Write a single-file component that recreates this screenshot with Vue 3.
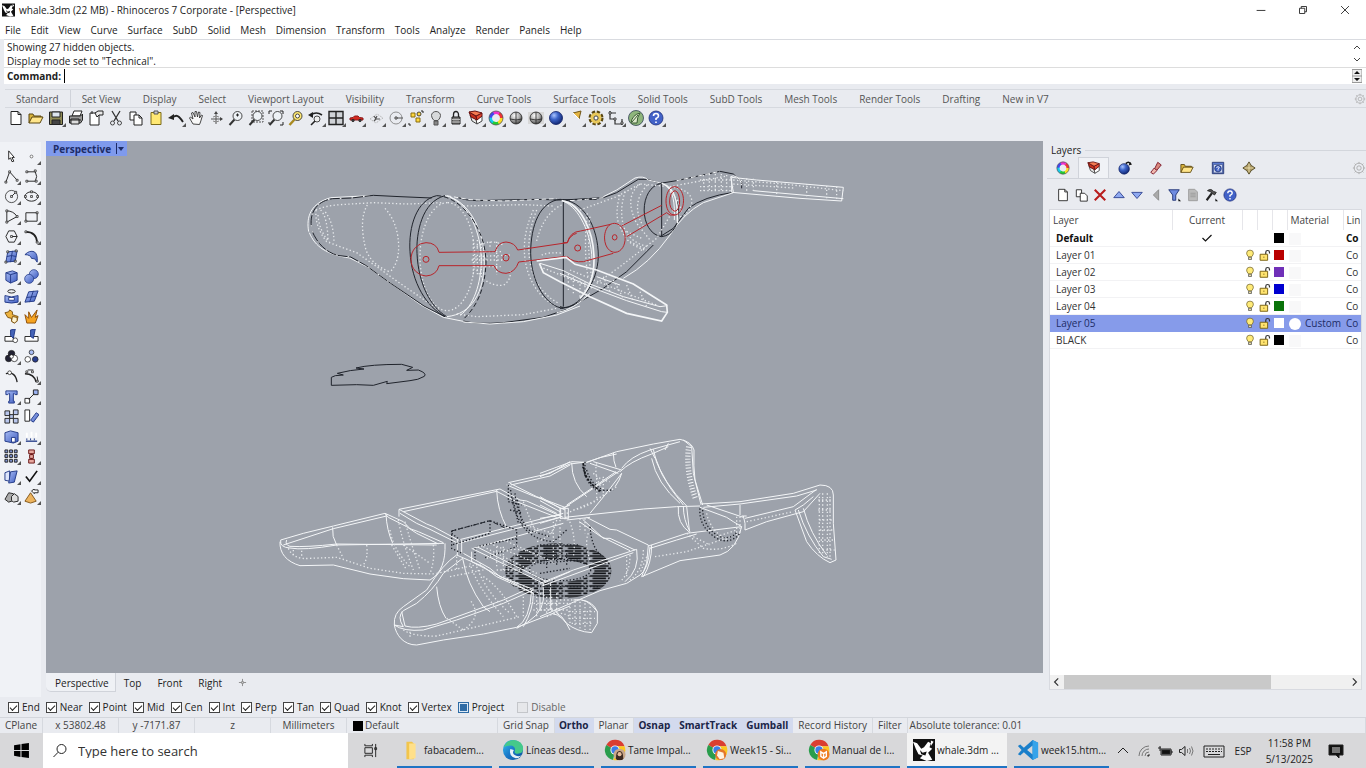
<template>
    <div class="app">
        <svg class="defs" aria-hidden="true">
            <defs>
                <radialGradient id="gBlue" cx=".35" cy=".3" r=".8">
                    <stop offset="0" stop-color="#a9c4ff" />
                    <stop offset=".4" stop-color="#3b63c8" />
                    <stop offset="1" stop-color="#0c1d63" />
                </radialGradient>
                <radialGradient id="gGrey" cx=".4" cy=".3" r=".8">
                    <stop offset="0" stop-color="#fff" />
                    <stop offset=".5" stop-color="#aaa" />
                    <stop offset="1" stop-color="#222" />
                </radialGradient>
                <linearGradient id="gBox" x2="1" y2="1">
                    <stop offset="0" stop-color="#a9bdf5" />
                    <stop offset="1" stop-color="#3e5cc0" />
                </linearGradient>
                <linearGradient id="gEdge" x2="1" y2="1">
                    <stop offset="0" stop-color="#35c1f1" />
                    <stop offset=".5" stop-color="#1a78c8" />
                    <stop offset="1" stop-color="#0c4f96" />
                </linearGradient>
            </defs>
        </svg>

        <!-- TITLE BAR -->
        <header class="titlebar">
            <svg class="logo" viewBox="0 0 16 16" v-html="art.rhino"></svg>
            <h1>whale.3dm (22 MB) - Rhinoceros 7 Corporate - [Perspective]</h1>
            <div class="windowButtons">
                <button aria-label="Minimize"><svg viewBox="0 0 16 16"><path d="M3 8.5h10" /></svg></button>
                <button aria-label="Restore"><svg viewBox="0 0 16 16"><path d="M4 6h6v6H4zM6 6V4h6v6h-2" /></svg></button>
                <button aria-label="Close"><svg viewBox="0 0 16 16"><path d="M3.500 3.500l9 9M12.500 3.500l-9 9" /></svg></button>
            </div>
        </header>

        <nav class="menu">
            <a v-for="m in menus" :key="m" href="#">{{ m }}</a>
        </nav>

        <!-- COMMAND AREA -->
        <section class="command">
            <div class="history">
                <div>
                    <p>Showing 27 hidden objects.</p>
                    <p>Display mode set to "Technical".</p>
                </div>
                <div class="arrows">
                    <svg viewBox="0 0 10 8"><path d="M2 6l3-3 3 3" /></svg>
                    <svg viewBox="0 0 10 8"><path d="M2 2l3 3 3-3" /></svg>
                </div>
            </div>
            <div class="prompt">
                <label for="cmd">Command:</label>
                <span class="caret"></span>
                <input id="cmd" v-model="command" type="text" />
                <svg class="spin" viewBox="0 0 10 14">
                    <path d="M0 .5h10v13H0zM0 7h10" fill="#eee" stroke="#999" />
                    <path d="M2 5l3-3 3 3zM2 9l3 3 3-3z" fill="#111" />
                </svg>
            </div>
        </section>

        <!-- TOOLBARS -->
        <nav class="tabs">
            <button v-for="(t, i) in toolTabs" :key="t" :class="{ active: i === 0 }">{{ t }}</button>
            <svg class="gear" viewBox="0 0 16 16" v-html="art.cog"></svg>
        </nav>
        <div class="toolbar">
            <button
                v-for="t in toolbar"
                :key="t"
                class="tool"
                :class="{ more: withMenu.includes(t) }"
                :aria-label="t"
            >
                <svg viewBox="0 0 16 16" v-html="art[t]"></svg>
            </button>
        </div>

        <main class="work">
            <aside class="sidebar">
                <button
                    v-for="(t, i) in sideTools"
                    :key="i"
                    class="tool"
                    :class="{ more: t.more }"
                    :aria-label="t.name"
                >
                    <svg viewBox="0 0 16 16" v-html="t.art"></svg>
                </button>
            </aside>

            <!-- VIEWPORT -->
            <section class="center">
                <div class="viewport">
                    <svg class="scene" viewBox="0 0 2991 1596" preserveAspectRatio="xMidYMid meet">
                        <defs>
                            <pattern id="hatch" width="74" height="15" patternUnits="userSpaceOnUse">
                                <path class="ink" d="M0 3h58M64 3h6M10 10h40M56 10h12" />
                            </pattern>
                        </defs>
                        <g transform="translate(1482 867)">
                            <ellipse class="hatched" cx="55" cy="423" rx="134" ry="58" />
                            <ellipse class="kd" cx="60" cy="420" rx="92" ry="32" />
                        </g>
                        <g v-for="(g, i) in scene" :key="i" :transform="g.at">
                            <path v-for="(p, j) in g.paths" :key="j" :class="p[0]" :d="p[1]" />
                        </g>
                    </svg>
                    <button class="viewTitle">Perspective<i></i></button>
                </div>
                <nav class="viewTabs">
                    <button class="active">Perspective</button>
                    <button>Top</button>
                    <button>Front</button>
                    <button>Right</button>
                    <button class="add" aria-label="New viewport">
                        <svg viewBox="0 0 10 10"><path d="M5 1v3M5 6v3M1 5h3M6 5h3M4 4h2v2H4z" /></svg>
                    </button>
                </nav>
            </section>

            <!-- LAYERS PANEL -->
            <aside class="panel">
                <h2>Layers</h2>
                <nav class="panelTabs">
                    <button v-for="t in panelTabs" :key="t" :class="{ active: t === 'layers' }" :aria-label="t">
                        <svg viewBox="0 0 16 16" v-html="art[t]"></svg>
                    </button>
                    <svg class="gear" viewBox="0 0 16 16" v-html="art.cog"></svg>
                </nav>
                <div class="panelTools">
                    <button v-for="t in panelTools" :key="t" :aria-label="t">
                        <svg viewBox="0 0 16 16" v-html="art[t]"></svg>
                    </button>
                </div>
                <div class="list">
                    <table>
                        <colgroup>
                            <col />
                            <col class="cCurrent" />
                            <col class="cIcon" />
                            <col class="cIcon" />
                            <col class="cIcon" />
                            <col class="cMaterial" />
                            <col class="cLine" />
                        </colgroup>
                        <thead>
                            <tr>
                                <th>Layer</th>
                                <th class="mid">Current</th>
                                <th></th>
                                <th></th>
                                <th></th>
                                <th>Material</th>
                                <th>Lin</th>
                            </tr>
                        </thead>
                        <tbody>
                            <tr
                                v-for="l in layers"
                                :key="l.name"
                                :class="{ current: l.current, selected: l.name === selected }"
                                @click="selected = l.name"
                            >
                                <td>{{ l.name }}</td>
                                <td class="mid">
                                    <svg v-if="l.current" viewBox="0 0 16 16" v-html="art.tick"></svg>
                                </td>
                                <td><svg v-if="!l.current" viewBox="0 0 16 16" v-html="art.on"></svg></td>
                                <td><svg v-if="!l.current" viewBox="0 0 16 16" v-html="art.unlocked"></svg></td>
                                <td><span class="swatch" :style="{ background: l.color }"></span></td>
                                <td class="material"><span class="ball"></span>{{ l.material }}</td>
                                <td>Co</td>
                            </tr>
                        </tbody>
                    </table>
                    <div class="hscroll">
                        <svg viewBox="0 0 10 10"><path d="M6 2L3 5l3 3" /></svg>
                        <div class="track"><div class="thumb"></div></div>
                        <svg viewBox="0 0 10 10"><path d="M4 2l3 3-3 3" /></svg>
                    </div>
                </div>
            </aside>
        </main>

        <!-- OSNAP -->
        <div class="osnap">
            <label v-for="s in snaps" :key="s.name" :class="s.kind">
                <input v-model="s.on" type="checkbox" />{{ s.name }}
            </label>
        </div>

        <div class="status">
            <button class="cplane">CPlane</button>
            <span class="coord">x 53802.48</span>
            <span class="coord">y -7171.87</span>
            <span class="coord">z</span>
            <span class="coord">Millimeters</span>
            <button class="layer"><i></i>Default</button>
            <button v-for="m in modes" :key="m.name" :class="{ on: m.on }" @click="m.on = !m.on">{{ m.name }}</button>
            <span class="tolerance">Absolute tolerance: 0.01</span>
        </div>

        <!-- TASKBAR -->
        <footer class="taskbar">
            <button class="start" aria-label="Start">
                <svg viewBox="0 0 16 16"><path d="M1 3l6-1v5.500H1zM8 1.900L15 1v6.500H8zM1 8.500h6V14l-6-1zM8 8.500h7V15l-7-.900z" /></svg>
            </button>
            <div class="search">
                <svg viewBox="0 0 16 16"><circle cx="9.500" cy="6" r="4.500" /><path d="M6.200 9.200L1.500 14" /></svg>
                <input v-model="search" type="text" placeholder="Type here to search" aria-label="Search" />
            </div>
            <button class="taskView" aria-label="Task view">
                <svg viewBox="0 0 16 16"><path d="M2 1v2h8V1M2 15v-2h8v2M2 5h8v6H2zM13.500 1v14M12.500 5h2v2h-2z" /></svg>
            </button>
            <div class="tasks">
                <button v-for="t in tasks" :key="t.title" :class="{ active: t.active }">
                    <svg viewBox="0 0 24 24" v-html="t.art"></svg>
                    <span>{{ t.title }}</span>
                </button>
            </div>
            <div class="tray">
                <svg viewBox="0 0 16 16"><path d="M3 10l5-5 5 5" /></svg>
                <svg viewBox="0 0 16 16"><path d="M3 13a10 10 0 0 1 10-10M6 13a7 7 0 0 1 7-7M9 13a4 4 0 0 1 4-4" stroke="#777" /><path d="M11.500 13l1.500-1.500V13z" /></svg>
                <svg viewBox="0 0 16 16"><path d="M4 6h10v6H4zM14 8h1v2h-1M1 5h3M3 3v5" /><path d="M5 7h8v4H5z" fill="#111" /></svg>
                <svg viewBox="0 0 16 16"><path d="M1.500 6.500h2L7 3.500v9l-3.500-3h-2z" /><path d="M9.500 6v4M11.500 5q2 3 0 6M13.500 3.500q3 4.500 0 9" stroke="#777" /></svg>
                <svg class="keys" viewBox="0 0 22 16"><path d="M1 3h20v11H1z" /><path d="M3 6h16M3 8.500h16" stroke-dasharray="2 1" /><path d="M5 11.500h12" /></svg>
                <span class="lang">ESP</span>
                <time>11:58 PM<br />5/13/2025</time>
                <svg class="note" viewBox="0 0 16 16"><path d="M1 2h14v10h-4v3l-3-3H1z" fill="#111" /><path d="M4 5h8M4 7h8M4 9h8" stroke="#ddd" /></svg>
            </div>
        </footer>
    </div>
</template>

<script setup>
import { ref, reactive } from "vue";

const command = ref("");
const search = ref("");
const selected = ref("Layer 05");

const menus = [
    "File", "Edit", "View", "Curve", "Surface", "SubD", "Solid", "Mesh", "Dimension",
    "Transform", "Tools", "Analyze", "Render", "Panels", "Help",
];
const toolTabs = [
    "Standard", "Set View", "Display", "Select", "Viewport Layout", "Visibility", "Transform",
    "Curve Tools", "Surface Tools", "Solid Tools", "SubD Tools", "Mesh Tools", "Render Tools",
    "Drafting", "New in V7",
];

// small helpers for the icon drawings
const line = (d, c = "#222", w = 1) => `<path d="${d}" fill="none" stroke="${c}" stroke-width="${w}"/>`;
const fill = (d, f, c = "#222", w = 1) => `<path d="${d}" fill="${f}" stroke="${c}" stroke-width="${w}"/>`;
const ball = (x, y, r, f, c = "#222") => `<circle cx="${x}" cy="${y}" r="${r}" fill="${f}" stroke="${c}" stroke-width=".8"/>`;
const dots = (...pts) => pts.map(([x, y]) => `<path d="M${x - 1} ${y - 1}h2v2h-2z" fill="#fff" stroke="#222" stroke-width=".8"/>`).join("");

const wheel = ["#e33", "#e3c", "#44e", "#1ce", "#2c3", "#fd2"]
    .map((c, i) => `<circle cx="8" cy="8" r="5.500" fill="none" stroke="${c}" stroke-width="3" stroke-dasharray="6 28.600" transform="rotate(${-60 - i * 60} 8 8)"/>`)
    .join("") + ball(8, 8, 7, "none", "#555");
const lens = line("M6.500 9.500L1.500 15", "#333", 2) + ball(9.500, 6, 4.500, "#eef2f6");
const question = '<path d="M5.500 6q0-2.500 2.500-2.500T10.500 6Q10.500 7.500 8 8.500V10M8 11.500v1.500" fill="none" stroke="#fff" stroke-width="1.600"/>';
const folder = fill("M1 13V4h4l1 2h7v2", "#d8b33c", "#5b4710") + fill("M1 13l3-6h11l-3 6z", "#ffe58a", "#5b4710");
const stack = fill("M2 5l6 4 1 5-5-3z", "#e9e9e9", "#444") + fill("M8 9l6-3v5l-5 3z", "#fff", "#444") + fill("M1 2l7 4 1 4-6-3z", "#c72f1b", "#611") + fill("M8 6l6-3v3l-5 4z", "#e5482f", "#611") + fill("M1 2l6-1 7 2-6 3z", "#f47a50", "#611");
const page = fill("M3 1.500h7l3 3v10H3z", "#fff") + line("M10 1.500v3h3");
const printer = fill("M4 6l2-5h8l-2 5z", "#fff") + fill("M1.500 6h11l2-2v6l-2 3h-11z", "#999") + fill("M3 9h8v5H3z", "#ddd") + line("M1 10h12");

const art = {
    rhino: '<path d="M0 0h16v16H0z" fill="#111"/><path d="M0 2l3 1 3 4 2-1 3-4 2 1-1 3 2 1-3 3 3 5-4 1-5-2 2-2-3-1-2-4z" fill="#fff"/><path d="M5 8l2 2 3-1-1 3-3-1z" fill="#111"/><path d="M13 1l2 1-2 3z" fill="#fff"/>',
    cog: ball(8, 8, 5.5, "none", "#999") + ball(8, 8, 2.5, "none", "#999") + line("M8 1v2M8 13v2M1 8h2M13 8h2M3 3l1.500 1.500M11.500 11.500L13 13M13 3l-1.500 1.500M4.500 11.500L3 13", "#aaa"),
    tick: line("M2 8l4 4 8-8", "#111", 1.6),
    on: fill("M6 10.500Q3.500 8 3.500 5.500a4.500 4 0 0 1 9 0Q12.500 8 10 10.500z", "#ffeb78", "#76662a") + fill("M6 11h4v3H6z", "#e8dca0", "#555"),
    unlocked: line("M9 7V4.500Q9 2 11.500 2T14 4.500V6", "#333", 1.6) + fill("M1.500 7h10v8h-10z", "#ffe36e", "#7a6315", 1.3) + line("M6.500 10v2", "#7a6315"),
    new: page,
    open: folder,
    save: fill("M1.500 2h13v12.500h-13z", "#8f8a55") + fill("M4 2h8v5H4z", "#dde5ee") + fill("M4 10h8v4.500H4z", "#444"),
    print: printer,
    properties: fill("M2 3h9v12H2z", "#fff") + fill("M7 3l3-2h5v4h-4l-2 2z", "#e8e8e8") + line("M4 1v3"),
    cut: line("M4 1l6 10M12 1L6 11", "#333", 1.3) + ball(4.5, 13, 2, "none") + ball(11.5, 13, 2, "none"),
    copy: fill("M2 2h6v8H2z", "#fff") + fill("M6 5h5l3 3v7H6z", "#fff") + line("M11 5v3h3"),
    paste: fill("M3 2.500h10v12H3z", "#ffe873", "#7a6a18") + fill("M6 1h4v3H6z", "#ccc", "#555"),
    undo: line("M4 8q4-4 7-1t4 5", "#222", 1.8) + '<path d="M0 8l6-4v6z" fill="#222"/>',
    pan: fill("M5 14L1.500 8l1-1L5 9 3.500 3l1.500-.5L7 7V1.500h1.500L9.500 7l1-5 1.500.5L11.500 8l2-3 1 .5L12.500 12l-1 2.500z", "#f8f8f8", "#333", 0.9),
    rotate: line("M8 3v11M3 9h11", "#555") + line("M5 7q3-2 6 0M5 11q3 2 6 0", "#888") + '<path d="M6 4l2-3 2 3zM12 7l3 2-3 2z" fill="#444"/>',
    zoom: lens + line("M8 5h3M9.500 3.500v3"),
    zoomWindow: '<path d="M4 1h11v11H4z" fill="none" stroke="#555" stroke-dasharray="2 1"/>' + lens,
    zoomExtents: lens + line("M1 4V1h3M12 1h3v3M15 12v3h-3M1 12v2"),
    zoomSelected: line("M6.500 9.500L1.500 15", "#a98a20", 2.4) + ball(9.5, 6, 4.5, "#ffe873") + ball(9.5, 6, 2, "#fff"),
    undoView: line("M3 5q5-4 11 0", "#222", 1.6) + '<path d="M0 5l5-3v6z" fill="#222"/>' + ball(9, 9, 3, "#eee") + line("M7 11l-4 4", "#222", 1.6),
    fourView: fill("M1 1.500h14v13H1z", "#cfd2d6", "#222", 1.4) + line("M8 2v12M1 8h14", "#222", 1.4),
    car: fill("M2 10V8l3-.5L6.500 6H10l1.500 1.500L15 8v2z", "#d32a20", "#8a1a1a") + ball(5, 10.5, 1.2, "#444") + ball(12, 10.5, 1.2, "#444"),
    cplane: '<path d="M2 9l7-5 6 4-7 5z" fill="none" stroke="#aaa" stroke-dasharray="1 1"/>' + line("M6 6l2 3h4M8 9l-2 2M9 6l-2 4", "#555", 1.2),
    circle: ball(8, 8, 6, "none", "#777") + line("M8 8h7", "#555") + dots([8, 8]),
    points: fill("M3 3h4v4H3z", "#ffd83e", "#886c10") + fill("M8 8h4v4H8z", "#ffd83e", "#886c10") + ball(11, 4, 2, "#ffd83e") + line("M13 1h2v2M1 13v2h2"),
    bulb: fill("M6 10.500Q3.500 8 3.500 5.500a4.500 4 0 0 1 9 0Q12.500 8 10 10.500z", "#d7d9db", "#555") + fill("M6 11h4v4H6z", "#888", "#555"),
    lock: line("M5.500 7V4.500a2.500 3 0 0 1 5 0V7", "#222", 1.3) + fill("M4 7h8v7H4z", "#777") + line("M4 9.500h8M4 12h8", "#bbb"),
    layers: stack,
    color: wheel,
    shade: ball(8, 8, 6, "url(#gGrey)") + line("M8 2v12M2 9q6 2 12 0", "#333", 0.9),
    render: '<path d="M0 2h16v12H0z" fill="#d8d8d8"/>' + ball(8, 8, 6, "url(#gGrey)") + line("M8 2v12M2 9q6 2 12 0", "#333", 0.9),
    sphere: ball(8, 8, 6.5, "url(#gBlue)", "#0c1d63"),
    light: fill("M5 3l8-2-2 8z", "#e4b545", "#6f5518") + line("M5 3l6 6", "#fff"),
    options: '<circle cx="8" cy="8" r="5" fill="none" stroke="#584510" stroke-width="5" stroke-dasharray="2.600 1.330"/><circle cx="8" cy="8" r="4" fill="none" stroke="#e9c85a" stroke-width="3"/>' + ball(8, 8, 2, "#fff"),
    dimension: line("M2 1v8h5M7 9v5h7M2 3h6M14 9v6", "#333", 1.2) + dots([2, 3], [7, 9], [14, 13]),
    grasshopper: ball(8, 8, 7.5, "#8eb57c", "#345") + fill("M3 13q1-8 9-10-3 4-3 10z", "#dde9cc", "#385a32") + line("M4 12L10 5", "#385a32"),
    help: ball(8, 8, 7, "#4262c8", "#1c2d78") + question,
    globe: ball(7, 9, 6, "url(#gBlue)", "#0c1d63") + line("M9 3q3-3 5 0", "#111", 1.8) + '<path d="M12 5l4-1-2-3z" fill="#111"/>',
    link: fill("M10 1.500l4 3-5 6-3-1z", "#d9887d", "#712") + fill("M6 8l3 3-4 4-3-2z", "#f0b8ae", "#712"),
    folder,
    helpBox: fill("M1.500 1.500h13v13h-13z", "#5b7ad0", "#24356f") + fill("M3 4h10v9.500H3z", "#dfe7fa", "#24356f", 0.6) + ball(8, 8.7, 3.8, "#3f60c4", "#24356f") + line("M6.500 8q0-1.500 1.500-1.500T9.500 8L8 9v2", "#fff", 0.9),
    move: fill("M8 1l2.500 4L15 8l-4.500 3L8 15l-2.500-4L1 8l4.500-3z", "#a89560", "#4d431f") + line("M8 3v10M3 8h10", "#efe3b0"),
    newLayer: page,
    newSublayer: fill("M1.500 2h6v8h-6z", "#fff") + fill("M6 6h5l3 3v6H6z", "#fff"),
    remove: line("M2 2l12 12M14 2L2 14", "#b81c1c", 2.4),
    up: fill("M8 4l6 7H2z", "#8fa9f0", "#2b3f8f"),
    down: fill("M8 12l6-7H2z", "#8fa9f0", "#2b3f8f"),
    back: fill("M11 2v12L5 8z", "#aaa", "#888"),
    filter: fill("M2 2h12L10 8v6H6.500V8z", "#6f8be0", "#1c2f70") + '<path d="M13 15v-3l3 3z" fill="#111"/>',
    sheet: fill("M3 1.500h7l3 3v10H3z", "#bbb", "#999") + line("M5 6h6M5 8h6M5 10h6", "#999"),
    hammer: line("M9 6l-6 8", "#222", 2.4) + fill("M4 3q4-3 7 1l3 1-2 3-5-4z", "#555") + '<path d="M13 15v-3l3 3z" fill="#111"/>',
};

const toolbar = [
    "new", "open", "save", "print", "properties", "cut", "copy", "paste", "undo", "pan", "rotate",
    "zoom", "zoomWindow", "zoomExtents", "zoomSelected", "undoView", "fourView", "car", "cplane",
    "circle", "points", "bulb", "lock", "layers", "color", "shade", "render", "sphere", "light",
    "options", "dimension", "grasshopper", "help",
];
const withMenu = [
    "save", "undo", "undoView", "fourView", "car", "cplane", "circle", "points", "bulb", "lock",
    "layers", "color", "render", "sphere", "light", "options", "dimension", "grasshopper", "help",
];
const panelTabs = ["color", "layers", "globe", "link", "folder", "helpBox", "move"];
const panelTools = ["newLayer", "newSublayer", "remove", "up", "down", "back", "filter", "sheet", "hammer", "help"];

const blue = "url(#gBox)";
const navy = "#223a86";
// two columns, read row by row
const sideTools = [
    { name: "Select", art: fill("M5 2l6 7H8.500l2 4-2 .5-1.500-4L5 11z", "#fff") },
    { name: "Point", more: true, art: ball(8, 8, 1.5, "#fff", "#555") },
    { name: "Polyline", more: true, art: line("M2 14L6 3l8 9") + dots([2, 14], [6, 3], [14, 12]) },
    { name: "Curve", more: true, art: line("M3 3h9q3 5 0 10H3") + dots([3, 3], [12, 2], [13, 13], [3, 13]) },
    { name: "Circle", more: true, art: ball(8, 8, 6.5, "none") + line("M8 8l4-4") + dots([8, 8], [12.5, 3.5]) },
    { name: "Ellipse", more: true, art: '<ellipse cx="8" cy="8" rx="7" ry="5" fill="none" stroke="#222"/>' + dots([8, 8], [8, 3], [1.5, 8], [14.5, 8]) },
    { name: "Arc", more: true, art: line("M3 2v12l11-6Q10 2 3 2") + dots([3, 2], [3, 14], [14, 8]) },
    { name: "Rectangle", more: true, art: line("M2 4h12v9H2z") + dots([2, 13], [14, 4]) },
    { name: "Polygon", more: true, art: line("M5 2h6l3 6-3 6H5L2 8zM8 8h6") + dots([8, 8]) },
    { name: "Fillet", more: true, art: line("M2 3q11 0 12 11", "#222", 1.8) + dots([2, 3], [14, 14]) },
    { name: "Surface", more: true, art: fill("M4 3l10-1-2 11-10 1z", blue, navy) + line("M3 8q5-2 10 0M9 2q-1 6-2 12", navy) + dots([4, 3], [13, 2], [12, 13], [2, 14]) },
    { name: "Sweep", more: true, art: fill("M1 6q5-5 10-3 4 3 3 11-2-5-6-4-1-4-7-4z", blue, navy) },
    { name: "Box", more: true, art: fill("M2 4l7-2 5 2v8l-7 3-5-3z", blue, navy) + line("M2 4l5 2 7-2M7 6v9", navy) },
    { name: "Boolean", more: true, art: ball(10.500, 5.500, 4.800, blue, navy) + ball(5.500, 10.500, 4.800, blue, navy) },
    { name: "Project", more: true, art: '<ellipse cx="8" cy="2.500" rx="4" ry="1.800" fill="none" stroke="#222"/>' + fill("M1 7q7 3 14 0v7q-7 2-14 0z", blue, navy) + fill("M5 9h6v3H5z", "#fff", navy) },
    { name: "Mesh", more: true, art: fill("M5 3l10-1-4 11-10 1z", blue, navy) + line("M3 9l10-1M10 2L6 14", navy) },
    { name: "Puzzle", art: fill("M1 4l4-1 1-2 3 2v3l3 1 3 1-1 4-3 3-3-2V10L4 9z", "#eeb440", "#7b5110") + fill("M9 8l5 1v4l-3 2-3-2z", "#fff4d0", "#7b5110") },
    { name: "Explode", art: fill("M3 15L1 6l4 4V3l3 6 6-8-2 8 3-2-3 8z", "#f5a422", "#8c4c06") },
    { name: "Trim", art: fill("M1 8h9v5H1z", "#fff") + fill("M7 1l5-1-2 10-3-3z", "#4564b8", navy) + ball(12, 12, 2.500, "#fff") },
    { name: "Split", art: fill("M1 8h14v5H1z", "#fff") + fill("M7 1l5-1-2 10-3-2z", "#4564b8", navy) },
    { name: "Group", more: true, art: ball(8, 5, 3.500, "#223") + ball(5, 10, 3.500, "#223") + ball(11, 10, 3.500, "#fff") + ball(8, 8, 2, "#fff") },
    { name: "Ungroup", art: ball(8, 3.500, 2.500, "#a9bdf5") + ball(4, 11, 3, "#fff") + ball(12, 11, 3, "#2a3f8f") },
    { name: "Extend", art: line("M2 5q10-3 12 9", "#222", 1.4) + ball(6, 4, 2, "#fff") },
    { name: "Blend", more: true, art: line("M1 5q10 0 12 9", "#222", 1.6) + line("M4 1h6M14 8l1 6") + dots([3, 3], [9, 3], [14, 13]) },
    { name: "Text", more: true, art: fill("M2 2h12v4h-2l-1-1h-1v8h1v2H5v-2h1V5H5L4 6H2z", blue, navy) },
    { name: "Move points", more: true, art: fill("M1 10h5v5H1z", "#fff") + fill("M10 1h5v5h-5z", "#9bb2f0") + line("M5 11l6-6") },
    { name: "Array", art: fill("M1 2h5v5H1zM10 1h5v5h-5zM1 10h5v5H1zM10 10h5v5h-5zM6 6h4v4H6z", "#b9c7ee") },
    { name: "Offset", art: fill("M1 1h5v12H1z", "#fff") + fill("M7 12l6-8 3 2-6 8z", blue, navy) },
    { name: "Solid edit", more: true, art: fill("M1 4l6-2 8 2v9l-5 2-9-2z", blue, navy) + fill("M8 9h4v5H8z", "#fff", navy) },
    { name: "Lights", more: true, art: line("M3 4v5M8 3v6M13 4v5", "#fff", 2) + line("M2 13h12", navy, 1.400) + line("M3 12v-2M7 12v-2M11 12v-2", navy) },
    { name: "Grid", more: true, art: fill("M1 1h3v3H1zM6 1h3v3H6zM11 1h3v3h-3zM1 6h3v3H1zM6 6h3v3H6zM11 6h3v3h-3zM1 11h3v3H1zM6 11h3v3H6zM11 11h3v3h-3z", "#8196d6") },
    { name: "Analyze", more: true, art: line("M8 3v10", "#911", 2) + fill("M5 1h6v4H5zM6 6h4v4H6zM5 11h6v4H5z", "#e8a9a0", "#611") },
    { name: "Blocks", more: true, art: fill("M1 4l5-2v11l-5-1z", "#dde5fb", navy) + fill("M7 3l7-1-3 12-6 1z", blue, navy) },
    { name: "Check", more: true, art: line("M2 8l4 5 8-11", "#111", 1.800) },
    { name: "Solids", more: true, art: fill("M1 11l4-7 5 1 1 7-6 2z", "#aaa") + fill("M8 8l3-3 4 3v5l-5 1-2-2z", "#ddd") },
    { name: "Cone", more: true, art: fill("M1 13l6-9 6 9-6 2z", "#edb45e", "#815518") + fill("M8 2l3-2v1h4v3h-4v1z", "#fff") },
];

const layers = [
    { name: "Default", color: "#000", current: true },
    { name: "Layer 01", color: "#b90000" },
    { name: "Layer 02", color: "#7030b8" },
    { name: "Layer 03", color: "#0000d0" },
    { name: "Layer 04", color: "#0a730a" },
    { name: "Layer 05", color: "#fff", material: "Custom" },
    { name: "BLACK", color: "#000" },
];

const snaps = reactive([
    ...["End", "Near", "Point", "Mid", "Cen", "Int", "Perp", "Tan", "Quad", "Knot", "Vertex"].map((name) => ({ name, on: true })),
    { name: "Project", on: false, kind: "partial" },
    { name: "Disable", on: false, kind: "disabled" },
]);
const modes = reactive([
    { name: "Grid Snap", on: false },
    { name: "Ortho", on: true },
    { name: "Planar", on: false },
    { name: "Osnap", on: true },
    { name: "SmartTrack", on: true },
    { name: "Gumball", on: true },
    { name: "Record History", on: false },
    { name: "Filter", on: false },
]);

const chrome = (badge) =>
    '<path d="M12 12L2.500 6.500A11 11 0 0 1 22.400 8H12z" fill="#da3e31"/><path d="M12 12l-2 11A11 11 0 0 1 2.500 6.500z" fill="#2a9d4c"/><path d="M12 8h10.400A11 11 0 0 1 10 23l5-9z" fill="#fbc820"/><circle cx="12" cy="12" r="5" fill="#fff"/><circle cx="12" cy="12" r="4" fill="#3b7de8"/>' + badge;
const tasks = [
    { title: "fabacadem...", art: '<path d="M7 3h6l2 2v17H7z" fill="#f2c54c"/><path d="M10 5h7v16l-7 1z" fill="#ffe08a"/>' },
    { title: "Líneas desd...", art: '<circle cx="12" cy="12" r="11" fill="url(#gEdge)"/><path d="M2 9Q5 1 13 1q10 1 10 10 0 5-6 5-4 0-3-3 1-5-4-6-5 0-8 2z" fill="#45c98a"/><path d="M9 11q-2 8 6 10 4 0 6-3-4 2-8-1-2-2 0-5z" fill="#fff" opacity=".9"/>' },
    { title: "Tame Impal...", art: chrome('<circle cx="17" cy="17" r="6.500" fill="#c9a78a"/><path d="M13 21q0-8 4-8t4 8l-1 2h-6z" fill="#3d2a22"/><circle cx="17" cy="16.500" r="2.200" fill="#e6bb98"/>') },
    { title: "Week15 - Si...", art: chrome('<circle cx="16" cy="17" r="6" fill="#e4762b"/><path d="M13 13l6 2 1 6-5 1-3-4z" fill="#fff4e2"/>') },
    { title: "Manual de I...", art: chrome('<circle cx="17" cy="17" r="6.500" fill="#ee7d22"/><path d="M14 14l3 2 3-2v5l-3 2-3-2zM17 16v5" fill="none" stroke="#fff" stroke-width="1.500"/>') },
    { title: "whale.3dm ...", active: true, art: '<g transform="scale(1.500)">' + art.rhino + "</g>" },
    { title: "week15.htm...", art: '<path d="M17 1l6 3v16l-6 3L7.500 14.500 3.500 18 1 16.500 5 12 1 7.500 3.500 6l4 3.500zM17 7l-6 5 6 5z" fill="#1a7fca" fill-rule="evenodd"/><path d="M17 1l6 3v16l-6 3z" fill="#35a3ea"/>' },
];

// wireframe: w = white, wd = white hidden, k = black, kd = black hidden, r = red
const scene = [
    {
        // head and body of the upper whale
        at: "translate(732 57)",
        paths: [
            ["wd", "M78 150Q100 138 150 134L250 128L350 132L460 128M78 150Q74 200 110 245L200 278L260 320L330 370L450 452"],
            ["wd", "M92 150Q112 170 114 240M106 156Q132 190 132 250M84 165Q88 215 118 245"],
            ["wd", "M232 135Q205 180 228 270Q245 315 300 336M285 145Q325 190 326 260Q326 310 300 336"],
            ["wd", "M472 128A82 162 0 0 0 472 452A82 162 0 0 0 472 128M520 138L700 134L790 138M500 462L560 470L700 464L800 445"],
            ["wd", "M730 150Q685 250 715 340Q740 410 800 440M740 150Q700 250 728 340Q750 400 806 430M815 135Q760 160 738 250"],
            ["wd", "M560 260Q600 235 640 255M556 290L660 285M560 330Q590 380 640 376Q665 360 660 330M550 240v110M562 240v110M574 250v100M600 245v20M620 245v100M545 300h100M552 275h88M552 320h80"],
            ["w", "M56 215C48 170 62 130 122 113L240 107M58 218C75 260 110 284 180 294L235 322L395 436L460 472L530 486"],
            ["k", "M64 200C58 150 87 122 128 116L185 114L250 106L330 110L425 114M66 213C84 253 107 275 142 286L182 291L227 316L302 370L402 438L465 470"],
            ["wdots", "M64 200C58 150 87 122 128 116L185 114L250 106M66 213C84 253 107 275 142 286L182 291L227 316L302 370"],
            ["k", "M500 112Q530 122 560 122L640 120L740 118L810 120L920 118M520 483Q560 494 640 488L760 472L830 448"],
            ["wdash", "M470 107L540 119L640 123L800 116"],
            ["w", "M520 486L600 492L700 485L800 465L870 438"],
            ["k", "M440 107C380 120 355 200 360 275C365 370 410 440 465 470M465 107C395 125 378 220 381 280C385 370 420 440 470 470"],
            ["w", "M465 107C540 120 583 220 583 298C583 400 545 462 470 470M480 112C540 135 572 220 574 298C574 370 550 440 510 466"],
            ["kdash", "M440 107Q480 108 520 145C565 190 588 250 588 310C584 390 560 440 520 478"],
            ["k", "M810 118C750 125 722 195 722 280C724 370 770 440 820 445M820 118V440"],
            ["r", "M447 277Q440 248 408 248A45 50 0 0 0 408 348Q440 346 447 317H612Q622 340 648 340Q675 338 686 306L828 289L840 302M447 277L615 275Q625 246 648 246Q675 248 683 270L832 248Q840 225 860 220"],
            ["r", "M399 298a9 9 0 1 0 18 0a9 9 0 1 0-18 0M639 293a9 10 0 1 0 18 0a9 10 0 1 0-18 0"],
            // outline on the ground plane
            ["k", "M124 676V652L136 647L160 645L142 640Q180 630 222 627L198 624Q240 613 335 613L368 622L350 631L385 630Q412 640 403 649Q385 660 360 662L290 671L292 664L250 676L200 674z"],
        ],
    },
    {
        // tail end of the upper whale and its fin
        at: "translate(1542 57)",
        paths: [
            ["k", "M10 120L130 113L170 98L235 58L262 58L300 70L350 62L480 34L520 42L545 66V85M0 440Q20 450 60 425L130 385L200 335L280 255M520 97Q430 110 385 145L340 205L300 230"],
            ["w", "M130 110L170 90L225 54Q250 46 265 60L305 70M-10 458Q40 450 90 400M190 355Q270 310 330 225Q370 160 430 128L520 98M520 97L512 50Q530 40 545 70"],
            ["wdash", "M30 122L80 118L130 113M350 62L480 34"],
            ["k", "M305 70C235 80 235 220 305 230C375 222 370 90 305 70M305 68V230"],
            ["k", "M0 118C70 120 115 200 115 290C112 370 60 445 0 445"],
            ["w2", "M5 122C60 130 102 210 102 300C102 350 85 390 60 415M305 70C345 85 355 120 352 190"],
            ["w", "M15 126C55 145 94 215 96 300M315 75C340 90 345 130 343 180"],
            ["wd", "M180 105Q160 170 185 210Q200 255 260 272M195 95Q175 160 195 210Q215 250 265 260M240 72Q190 110 230 190L270 240M262 75Q210 130 250 200M330 80Q400 90 395 130Q385 165 360 170M330 95Q360 120 365 160"],
            ["wd", "M60 150L170 110L240 72L330 80L500 48M110 370L180 320L290 235L340 150M200 215L245 235M210 245L260 270M90 170Q80 270 95 350M82 160Q70 270 84 350"],
            ["wd", "M430 45L432 95M448 42v54M466 42v54M484 42v54M500 45v50M420 60h100M420 80h100M420 92h100"],
            ["w", "M515 52L590 60L850 82L845 123L720 115L515 97zM580 92L850 116"],
            ["wd", "M520 60L670 72L850 92M520 72L700 84M560 55v38M580 56v40M650 65v46M740 72v42M800 78v42M830 80v40"],
            ["r", "M10 248H22Q30 215 62 213L152 193M22 290Q38 308 70 305L160 280M163 190C125 190 122 275 165 277C206 275 206 192 163 190M185 198L305 136M200 230L320 158L330 165H345"],
            ["r", "M44 264a9 9 0 1 0 18 0a9 9 0 1 0-18 0M157 232a7 8 0 1 0 14 0a7 8 0 1 0-14 0M345 80C310 80 308 165 345 165C378 160 380 85 345 80M345 92C325 95 322 150 345 154C365 150 362 95 345 92"],
            ["w2", "M-70 303L18 292L45 313L110 330L220 372L320 435L322 457L305 483L200 460L90 410L0 365L-50 338L-62 310"],
            ["w", "M-60 310L10 332L90 372L190 410L300 440L322 437M0 340L120 392L200 422L305 455L322 457M110 350L180 375"],
            ["wd", "M-55 285Q-30 275 10 280M-60 320L100 385M30 330L200 400L290 435M60 410v-50M75 415v-50M40 400v-50M25 390v-50M130 350l20 45M160 360l30 55M200 375l20 50M240 395l20 45"],
        ],
    },
    {
        // lower model, left half
        at: "translate(672 867)",
        paths: [
            ["w", "M32 330L100 310L190 288L345 250L400 275L420 296L445 305L520 338M40 345L190 296L350 258M345 250L355 262L410 290L440 310L505 342"],
            ["w", "M32 330Q28 352 60 354Q100 362 200 345L522 340M50 330Q44 345 60 349Q110 352 200 342L500 345"],
            ["w", "M30 335C28 370 50 395 90 407L190 405L300 432L400 446L480 450C515 430 527 390 525 340M188 292Q185 320 200 345M348 252Q350 300 368 340"],
            ["wd", "M55 355Q70 390 120 385L200 382L300 415L400 430L500 432M70 360v20M95 362v22M200 345l20 40M290 345q5 40-10 60M365 345L410 420M385 270Q395 330 430 420M405 275Q420 330 450 420M360 300Q370 360 420 410M400 345L480 400M490 345Q495 390 480 430"],
            ["w", "M387 238L690 177L750 210L770 213L880 262M387 238V260M387 238L470 282L490 290L565 330M390 250L440 280L480 298L560 338M400 245L680 184L740 215L860 262"],
            ["w", "M565 330L880 250M565 340L870 262M562 330V375M575 330V370M610 355L880 280M680 180Q682 240 710 292"],
            ["kd", "M545 303L660 272L740 300V350L640 385M545 303V355L580 372M660 272V310L545 345M545 310L570 330M740 325L620 350M615 355V390"],
            ["kdash", "M545 303L660 272L705 294"],
            ["w", "M715 158L840 130L900 95M722 165L840 138L900 105M710 165L790 198L810 205L885 240M720 160L800 200L885 232M870 238L900 225M872 240V265M885 235V268"],
            ["kd", "M715 165V215M722 180Q730 250 760 290Q790 330 850 335L890 300M735 190Q740 250 775 300L840 320M728 205L745 280M742 210L758 290M715 215l40 10M720 240l35 8"],
            ["wd", "M760 215Q780 270 800 310M860 270Q850 320 800 335M780 290L850 310"],
            ["w", "M560 375Q520 400 470 480L400 530Q370 550 373 585L400 590Q380 560 400 542L440 520Q490 480 520 430L578 385"],
            ["w", "M373 585C378 615 400 645 440 645L520 630L640 612L740 592Q780 570 785 480M373 585Q400 605 460 600L560 570L700 520L790 480M395 545L405 588Q440 598 500 582L700 510L770 478"],
            ["w", "M500 470Q505 530 528 565M578 385Q590 460 640 530L660 545M560 375L640 410L680 440L790 490M580 370L660 415L690 440L790 478"],
            ["wd", "M400 600Q430 620 500 618L600 595L750 560M600 400Q620 470 700 560M620 410Q650 490 720 550M530 565L580 600M640 440Q690 470 740 560M500 430L640 400M540 440L640 420M580 600Q640 560 600 510M420 605v20M560 380L560 420"],
            ["w", "M605 355L820 460M605 365V395L790 490M620 350L830 455M820 460L900 425M820 460V510M842 458V540M820 510Q815 560 740 595M790 490Q790 540 760 590M740 592L850 550"],
            ["wd", "M660 340L800 400M640 350L800 430M700 330L860 400M680 420h70M650 385q60-40 130-20M700 440L830 500M760 500v60M800 500v60M840 480v70M860 490v60M780 520h120M790 540h110M830 560Q870 540 900 560M680 350v60M700 350v70"],
            ["w", "M850 548L900 528M845 550Q880 555 900 600"],
        ],
    },
    {
        // lower model, right half and tails
        at: "translate(1482 867)",
        paths: [
            ["w", "M0 130L95 95L140 97L230 65L340 42L420 28Q455 35 462 60Q460 110 465 150L488 225M0 140L90 102L130 97M140 97Q180 80 230 72"],
            ["w", "M160 95L245 120M150 100L235 130M95 98Q95 160 140 200M220 68Q220 95 228 112M245 115Q270 80 330 60L420 35M240 125Q270 95 335 72L385 50"],
            ["w", "M240 122L70 235M228 125L160 172L80 225M245 130Q200 190 150 250M225 170Q240 150 245 130"],
            ["kd", "M130 100Q130 150 180 182L220 180M135 95V140M140 120Q150 160 190 180M128 110Q140 170 180 185"],
            ["k2d", "M130 100Q130 150 180 182"],
            ["wd", "M170 100Q160 140 190 180M160 130Q180 150 210 155M80 250L160 215L230 170M100 240Q150 230 190 195M170 145v60M190 140v60"],
            ["w", "M340 58Q350 130 430 225M335 85Q350 160 420 220M345 80Q370 160 440 228M330 55L345 85M385 40L375 60"],
            ["w", "M430 30L455 50L460 130L482 220"],
            ["rung", "M446 50Q436 120 466 205"],
            ["w", "M75 262L310 237L410 230L480 228M80 270L150 262M60 235H85V265H60zM0 200L60 235M0 212L60 245M0 225L50 250M0 265L60 255M0 280L60 262"],
            ["wd", "M120 265V300M135 265V310M85 265Q110 320 100 380M40 275V400M60 270V390M150 300Q130 330 150 390"],
            ["w", "M140 262L210 298L230 300L325 345M128 268L190 325L210 325L285 360M118 275L180 318L270 362M0 460L100 420L290 358M0 470L280 368"],
            ["w", "M290 358Q300 420 255 455M330 350Q325 420 300 435L260 460L180 482L0 560M325 345L320 400L305 440M335 345Q335 400 310 440"],
            ["wd", "M270 375Q270 430 240 455M310 360Q310 420 270 450M260 380V440M320 380L300 430M345 380L440 365L600 310"],
            ["w", "M325 348L440 310L605 290M330 355L410 330L470 312M305 440L420 392L540 375Q590 360 605 290M415 230Q410 280 450 308M430 228Q430 270 450 305M440 230L448 300"],
            ["w", "M480 222L600 215L760 190L840 165Q880 165 880 195V280L888 390L870 398Q830 380 800 335L765 240M490 232L600 222L770 198L830 180M500 225L610 262M480 232L560 262L580 275L605 290M600 225V255"],
            ["w", "M610 258L615 280V300L680 275L790 245L840 190M615 265L760 230L830 178M605 258H620M765 240L790 225L820 200M775 240Q800 320 850 380L875 388M790 235Q810 310 860 375"],
            ["kd", "M480 235Q475 290 530 325Q570 345 600 310M488 240Q490 290 535 318Q570 332 592 305"],
            ["wd", "M440 310L490 355Q540 365 590 340M500 250Q510 300 560 330M530 320L590 300M600 260V310M590 260V315M460 320L510 345M620 275L760 245"],
            ["wd", "M838 200V370M848 190V375M862 190V380M870 200V380M835 210h40M835 240h42M838 270h40M840 300h40M842 330h40M848 360h36"],
            ["w", "M0 500V540M100 510Q140 500 172 545V580L155 608Q110 605 80 580L65 560L50 550M125 510Q160 515 172 545"],
            ["wd", "M90 520V580M105 515V590M120 515V595M135 520V600M150 530V600M85 545H165M85 565H165M95 580H160M20 500v50M35 500v45M50 500v50M0 520h60M0 540h60M60 510h60"],
            ["kd", "M150 290Q155 360 190 380M0 345h120M20 360v60M50 360v50M80 360v50M0 470h180M0 400L120 390M0 430L90 415"],
        ],
    },
];
</script>

<style>
body {
    background: #e9ebf0;
    font-family: "Open Sans", "Noto Sans", sans-serif;
}
</style>

<style scoped>
.app {
    display: flex;
    flex-direction: column;
    min-height: 100vh;
    font-size: 10px;
    line-height: 14px;
    color: #222;
}
.defs {
    position: absolute;
    width: 0;
    height: 0;
}
button {
    font: inherit;
    color: inherit;
    background: none;
    border: 0;
    padding: 0;
    margin: 0;
}
h1,
h2,
p {
    font-size: inherit;
    font-weight: 400;
    margin: 0;
}
svg {
    display: block;
}

/* title and menu */
.titlebar {
    display: flex;
    align-items: center;
    height: 20px;
    background: #fff;
    padding-left: 2px;
}
.logo {
    width: 13px;
    height: 14px;
    margin-right: 4px;
}
.windowButtons {
    margin-left: auto;
    display: flex;
}
.windowButtons button {
    width: 42px;
    display: flex;
    justify-content: center;
}
.windowButtons svg {
    width: 14px;
    height: 14px;
    fill: none;
    stroke: #222;
}
.menu {
    display: flex;
    gap: 10px;
    height: 19px;
    align-items: center;
    background: #fff;
    padding-left: 5px;
}
.menu a {
    color: #222;
    text-decoration: none;
}

/* command */
.command {
    margin-left: 4px;
    border-top: 1px solid #d9dbe0;
    background: #fff;
}
.history {
    display: flex;
    justify-content: space-between;
    padding-left: 3px;
    height: 27px;
    border-bottom: 1px solid #ddd;
}
.history p {
    line-height: 14px;
}
.arrows {
    display: flex;
    flex-direction: column;
    justify-content: space-around;
    padding-right: 4px;
}
.arrows svg {
    width: 10px;
    height: 8px;
    fill: none;
    stroke: #444;
}
.prompt {
    display: flex;
    align-items: center;
    height: 16px;
    padding: 0 4px 0 3px;
}
.prompt label {
    font-weight: 700;
}
.caret {
    width: 1px;
    height: 14px;
    margin-left: 3px;
    background: #000;
}
.prompt input {
    flex: 1;
    border: 0;
    outline: 0;
    padding: 0;
    font: inherit;
    height: 14px;
}
.spin {
    width: 10px;
    height: 14px;
}

/* toolbars */
.tabs {
    display: flex;
    align-items: center;
    margin: 5px 0 0 5px;
    height: 17px;
    border-top: 1px solid #d6d9df;
    border-bottom: 1px solid #d6d9df;
    color: #555;
}
.tabs button {
    padding: 0 11px;
    height: 17px;
}
.tabs .active {
    border-right: 1px solid #d0d3da;
}
.gear {
    width: 12px;
    height: 12px;
    margin-left: auto;
}
.toolbar {
    display: flex;
    padding-left: 6px;
    margin-bottom: 13px;
}
.tool {
    position: relative;
    width: 20px;
    height: 20px;
    display: flex;
    align-items: center;
    justify-content: center;
}
.tool svg {
    width: 16px;
    height: 16px;
}
.more::after {
    content: "";
    position: absolute;
    right: 0;
    bottom: 1px;
    border-left: 4px solid transparent;
    border-bottom: 4px solid #555;
}

/* main area */
.work {
    flex: 1;
    display: flex;
}
.sidebar {
    display: grid;
    grid-template-columns: 20px 20px;
    grid-auto-rows: 20px;
    width: 41px;
    margin: 1px 3px 0 0;
    padding: 4px 0 4px 1px;
    align-self: stretch;
    align-content: start;
    background: #f0f2f6;
    box-sizing: border-box;
}
.sidebar .tool svg {
    width: 15px;
    height: 15px;
}
.center {
    flex: 1;
    margin-left: 2px;
    display: flex;
    flex-direction: column;
    min-width: 0;
}
.viewport {
    position: relative;
    flex: 1;
    background: #9da2ab;
}
.scene {
    position: absolute;
    width: 100%;
    height: 100%;
    fill: none;
}
.scene path,
.scene ellipse {
    stroke-width: 3;
    stroke: #f4f6f8;
}
.scene .w2 {
    stroke-width: 5;
}
.scene .wd {
    stroke-width: 4;
    stroke-dasharray: 4 7;
    stroke: #e6e9ec;
}
.scene .wdash {
    stroke-dasharray: 14 8;
}
.scene .wdots {
    stroke-dasharray: 5 30;
}
.scene .k {
    stroke: #20242c;
}
.scene .kd {
    stroke: #20242c;
    stroke-width: 4;
    stroke-dasharray: 4 6;
}
.scene .k2d {
    stroke: #14161a;
    stroke-width: 5;
    stroke-dasharray: 7 5;
}
.scene .kdash {
    stroke: #20242c;
    stroke-dasharray: 14 8;
}
.scene .r {
    stroke: #b8252b;
}
.scene .rung {
    stroke-width: 16;
    stroke-dasharray: 3 6;
}
.scene .ink {
    stroke: #14161a;
    stroke-width: 5;
}
.scene .hatched {
    stroke: url(#hatch);
    stroke-width: 50;
}
.viewTitle {
    position: absolute;
    left: 0;
    top: 0;
    height: 15px;
    padding: 0 3px 0 7px;
    display: flex;
    align-items: center;
    gap: 7px;
    background: #7f9aec;
    color: #1d2c66;
    font-weight: 700;
}
.viewTitle i {
    border: 3px solid transparent;
    border-top: 4px solid #1d2c66;
    border-bottom: 0;
}
.viewTitle::before {
    content: "";
    position: absolute;
    right: 10px;
    top: 2px;
    bottom: 2px;
    border-left: 1px solid #1d2c66;
}
.viewTabs {
    display: flex;
    height: 19px;
    margin-bottom: 5px;
}
.viewTabs button {
    padding: 0 8px;
    line-height: 20px;
}
.viewTabs .active {
    padding: 0 6px 0 9px;
    background: #eff1f5;
    border-right: 1px solid #d0d3da;
    border-bottom: 1px solid #d0d3da;
    border-radius: 0 0 0 5px;
}
.add svg {
    width: 9px;
    height: 9px;
    fill: none;
    stroke: #888;
}

/* layers */
.panel {
    width: 323px;
    display: flex;
    flex-direction: column;
    padding: 2px 0 7px 6px;
    box-sizing: border-box;
}
.panel h2 {
    display: flex;
    align-items: center;
    gap: 4px;
    line-height: 14px;
    padding-left: 2px;
}
.panel h2::after {
    content: "";
    flex: 1;
    border-top: 1px solid #d3d6dc;
}
.panelTabs {
    display: flex;
    align-items: center;
    height: 21px;
    margin-left: -2px;
    border-bottom: 1px solid #d0d3da;
    color: #999;
}
.panelTabs button {
    width: 31px;
    height: 21px;
    display: flex;
    align-items: center;
    justify-content: center;
}
.panelTabs .active {
    background: #f0f2f6;
    border: 1px solid #d0d3da;
    border-bottom: 0;
    box-sizing: border-box;
}
.panelTabs svg,
.panelTools svg {
    width: 14px;
    height: 14px;
}
.panelTools {
    display: grid;
    grid-template-columns: repeat(10, 1fr);
    width: 185px;
    padding: 9px 5px 7px;
}
.panelTools button {
    display: flex;
    justify-content: center;
}
.list {
    flex: 1;
    display: flex;
    flex-direction: column;
    background: #fff;
    border: 1px solid #d8dae0;
    margin-right: 4px;
}
table {
    width: 100%;
    table-layout: fixed;
    border-collapse: collapse;
}
.cCurrent {
    width: 70px;
}
.cIcon {
    width: 15px;
}
.cMaterial {
    width: 56px;
}
.cLine {
    width: 18px;
}
th {
    font-weight: 400;
    text-align: left;
    height: 20px;
    padding: 0 0 0 3px;
    border-right: 1px solid #e6e6ea;
    color: #444;
}
th:last-child {
    border-right: 0;
}
td {
    height: 16px;
    padding: 0 0 0 6px;
    border-bottom: 1px solid #f2f2f4;
    white-space: nowrap;
    color: #333;
}
td:nth-child(n + 3) {
    padding-left: 2px;
}
td:last-child {
    padding-left: 3px;
}
.mid {
    text-align: center;
    padding: 0;
}
td svg {
    width: 12px;
    height: 12px;
}
.mid svg {
    margin: 0 auto;
}
.current td {
    font-weight: 700;
    color: #111;
}
.selected td {
    background: #869bea;
    border-color: #869bea;
    color: #1d2c66;
}
.swatch {
    display: block;
    width: 10px;
    height: 10px;
}
.ball {
    display: inline-block;
    width: 12px;
    height: 12px;
    margin-right: 4px;
    vertical-align: middle;
    background: #f8f8f9;
}
.selected .ball {
    background: #fff;
    border-radius: 50%;
}
.hscroll {
    margin-top: auto;
    display: flex;
    align-items: center;
    height: 14px;
    background: #f0f0f0;
}
.hscroll svg {
    width: 14px;
    height: 12px;
    fill: none;
    stroke: #333;
}
.track {
    flex: 1;
}
.thumb {
    width: 73%;
    height: 14px;
    background: #c9c9c9;
}

/* bottom bars */
.osnap {
    display: flex;
    align-items: center;
    gap: 6px;
    height: 20px;
    padding: 0 8px;
}
.osnap label {
    display: flex;
    align-items: center;
    gap: 3px;
}
.osnap input {
    appearance: none;
    width: 11px;
    height: 11px;
    margin: 0;
    border: 1px solid #444;
    background: #fff;
    display: grid;
    place-items: center;
}
.osnap input:checked::after {
    content: "";
    width: 6px;
    height: 3px;
    border: solid #222;
    border-width: 0 0 1px 1px;
    transform: rotate(-45deg);
}
.osnap .partial input {
    border-color: #2e6ba5;
    background: #2e6ba5;
    box-shadow: inset 0 0 0 1px #dbe8f5;
}
.osnap .disabled {
    margin-left: 7px;
    color: #666;
}
.osnap .disabled input {
    border-color: #c4c6ca;
    background: #e6e7ea;
}
.status {
    display: flex;
    align-items: center;
    height: 15px;
    border-top: 1px solid #d3d6dc;
    color: #444;
}
.status > * {
    height: 15px;
    line-height: 15px;
    padding: 0 5px;
    border-right: 1px solid #d6d9df;
    box-sizing: border-box;
    white-space: nowrap;
}
.status .cplane {
    width: 43px;
}
.status .coord {
    width: 76px;
    text-align: center;
}
.status .layer {
    width: 151px;
    display: flex;
    align-items: center;
    gap: 2px;
    padding-left: 6px;
}
.layer i {
    width: 10px;
    height: 10px;
    background: #000;
}
.status .on {
    padding: 0 4px;
    background: #d3daee;
    border-color: #d3daee;
    color: #1b2547;
    font-weight: 700;
}
.status .tolerance {
    flex: 1;
    padding-left: 2px;
}

/* taskbar */
.taskbar {
    display: flex;
    height: 35px;
    background: #d8d8da;
}
.start {
    width: 43px;
    display: flex;
    align-items: center;
    justify-content: center;
}
.start svg {
    width: 17px;
    height: 17px;
}
.search {
    width: 305px;
    display: flex;
    align-items: center;
    gap: 10px;
    padding-left: 9px;
    background: #fff;
    box-sizing: border-box;
}
.search svg {
    width: 16px;
    height: 16px;
    fill: none;
    stroke: #222;
}
.search input {
    flex: 1;
    border: 0;
    outline: 0;
    padding: 0;
    font: inherit;
    font-size: 13px;
}
.search input::placeholder {
    color: #333;
}
.taskView {
    width: 45px;
    display: flex;
    align-items: center;
    justify-content: center;
}
.taskView svg {
    width: 15px;
    height: 15px;
    fill: none;
    stroke: #222;
}
.tasks {
    display: flex;
    gap: 7px;
    padding-left: 4px;
}
.tasks button {
    width: 95px;
    display: flex;
    align-items: center;
    gap: 2px;
    padding-left: 3px;
    border-bottom: 2px solid #1f74c4;
    white-space: nowrap;
    box-sizing: border-box;
}
.tasks .active {
    width: 100px;
    background: #f3f3f3;
    padding-left: 6px;
}
.tasks svg {
    width: 22px;
    height: 22px;
    flex: none;
}
.tray {
    margin-left: auto;
    padding-right: 22px;
    display: flex;
    align-items: center;
    gap: 5px;
}
.tray svg {
    width: 16px;
    height: 16px;
    fill: none;
    stroke: #222;
}
.tray .keys {
    width: 22px;
    margin-left: 4px;
}
.lang {
    margin-left: 5px;
}
.tray time {
    text-align: center;
    line-height: 16px;
    margin: 0 10px 0 9px;
}
</style>
